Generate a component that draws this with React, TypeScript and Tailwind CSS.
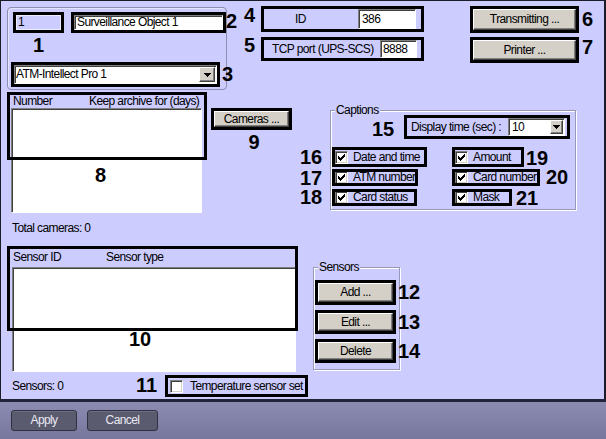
import React from "react";

const sunken =
  "border border-t-[#808080] border-l-[#808080] border-r-white border-b-white shadow-[inset_1px_1px_0_#404040]";
const raised =
  "bg-[#d4d0c8] border border-t-white border-l-white border-r-[#404040] border-b-[#404040] shadow-[inset_-1px_-1px_0_#808080]";

function Num({ children, className = "" }: { children: React.ReactNode; className?: string }) {
  return (
    <div className={`font-['Liberation_Sans',sans-serif] font-bold text-[20px] leading-[20px] tracking-normal text-black shrink-0 ${className}`}>
      {children}
    </div>
  );
}

function Hl({ children, className = "" }: { children?: React.ReactNode; className?: string }) {
  return (
    <div className={`outline-[3px] outline-solid outline-black outline-offset-[-3px] p-[3px] shrink-0 ${className}`}>
      {children}
    </div>
  );
}

function Btn({ children }: { children: React.ReactNode }) {
  return <div className={`h-full w-full ${raised} flex items-center justify-center whitespace-nowrap`}>{children}</div>;
}

const checkPixels = [
  [6, 0], [5, 1], [6, 1], [0, 2], [4, 2], [5, 2], [6, 2], [0, 3], [1, 3], [3, 3], [4, 3], [5, 3],
  [0, 4], [1, 4], [2, 4], [3, 4], [4, 4], [1, 5], [2, 5], [3, 5], [2, 6],
];
const checkD = checkPixels.map(([x, y]) => `M${x} ${y}h1v1h-1z`).join("");

function Check({ checked }: { checked: boolean }) {
  return (
    <div className="w-[13px] h-[13px] shrink-0 bg-white border border-t-[#808080] border-l-[#808080] border-r-white border-b-white shadow-[inset_1px_1px_0_#404040,inset_-1px_-1px_0_#d4d0c8] flex items-center justify-center">
      {checked && (
        <svg width="7" height="7" viewBox="0 0 7 7" shapeRendering="crispEdges">
          <path d={checkD} fill="#000" />
        </svg>
      )}
    </div>
  );
}

function Arrow() {
  return (
    <svg width="7" height="4" viewBox="0 0 7 4" shapeRendering="crispEdges">
      <path d="M0 0h7v1h-1v1h-1v1h-1v1h-1v-1h-1v-1h-1v-1h-1z" fill="#000" />
    </svg>
  );
}

function CheckHl({ label, w, h, checked = true }: { label: string; w: string; h: string; checked?: boolean }) {
  return (
    <Hl className={`${w} ${h}`}>
      <div className="h-full flex items-center">
        <Check checked={checked} />
        <span className="ml-[5px] whitespace-nowrap">{label}</span>
      </div>
    </Hl>
  );
}

export default function App() {
  return (
    <div className="w-[606px] h-[439px] flex flex-col overflow-hidden font-['Liberation_Sans',Arial,sans-serif] text-[12px] leading-[15px] tracking-[-0.6px] text-black">
      <div className="h-[399px] shrink-0 flex flex-col bg-[#ccccff] border-t border-l border-r-2 border-[#1c1c28]">
        {/* Section A */}
        <div className="h-[91px] flex items-start shrink-0">
          <div className="ml-[6px] mt-[6px] w-[220px] h-[83px] border border-[#8e8eb0] rounded-[4px] shadow-[inset_1px_1px_0_#e4e4ff] flex flex-col shrink-0">
            <div className="mt-[4px] flex items-start">
              <Hl className="ml-[5px] w-[51px] h-[21px]">
                <div className="h-full bg-[#ccccff] border border-[#ececff] flex items-center pl-[1px]">1</div>
              </Hl>
              <Hl className="ml-[7px] w-[155px] h-[21px]">
                <div className={`h-full bg-white ${sunken} flex items-center pl-[2px] whitespace-nowrap`}>Surveillance Object 1</div>
              </Hl>
              <Num className="-mt-[1px]">2</Num>
            </div>
            <Num className="mt-[2px] ml-[5px] w-[51px] text-center">1</Num>
            <div className="mt-[7px] flex items-start">
              <Hl className="ml-[3px] w-[209px] h-[25px]">
                <div className={`h-full bg-white ${sunken} flex items-center`}>
                  <span className="pl-[1px] whitespace-nowrap">ATM-Intellect Pro 1</span>
                  <div className={`ml-auto mr-[1px] w-[16px] h-[15px] ${raised} flex items-center justify-center`}>
                    <Arrow />
                  </div>
                </div>
              </Hl>
              <Num className="ml-[2px] mt-[2px]">3</Num>
            </div>
          </div>

          <div className="ml-[17px] flex flex-col shrink-0">
            <div className="mt-[4px] flex items-start">
              <Num className="w-[17px]">4</Num>
              <Hl className="mt-[1px] w-[163px] h-[26px]">
                <div className="h-full flex items-stretch">
                  <span className="pl-[31px] self-center">ID</span>
                  <div className={`ml-auto mr-[5px] w-[58px] bg-white ${sunken} flex items-center pl-[3px]`}>386</div>
                </div>
              </Hl>
            </div>
            <div className="mt-[3px] flex items-start">
              <Num className="w-[17px]">5</Num>
              <Hl className="mt-[2px] w-[163px] h-[24px]">
                <div className="h-full flex items-stretch">
                  <span className="pl-[8px] self-center whitespace-nowrap">TCP port (UPS-SCS)</span>
                  <div className={`ml-auto mr-[4px] w-[37px] bg-white ${sunken} flex items-center pl-[2px]`}>8888</div>
                </div>
              </Hl>
            </div>
          </div>

          <div className="ml-[46px] flex flex-col shrink-0">
            <div className="mt-[5px] flex items-start">
              <Hl className="w-[109px] h-[27px]">
                <Btn>Transmitting ...</Btn>
              </Hl>
              <Num className="ml-[3px] mt-[3px]">6</Num>
            </div>
            <div className="mt-[4px] flex items-start">
              <Hl className="w-[109px] h-[26px]">
                <Btn>Printer ...</Btn>
              </Hl>
              <Num className="ml-[3px]">7</Num>
            </div>
          </div>
        </div>

        {/* Section B */}
        <div className="h-[148px] flex items-start shrink-0">
          <div className="ml-[6px] w-[200px] relative shrink-0 flex flex-col">
            <div className="h-[16px] pt-[2px] flex whitespace-nowrap">
              <span className="ml-[6px] w-[76px]">Number</span>
              <span>Keep archive for (days)</span>
            </div>
            <div className={`ml-[4px] w-[191px] h-[105px] bg-white ${sunken}`}>
              <Num className="pt-[56px] pl-[83px]">8</Num>
            </div>
            <div className="absolute left-0 top-0 w-[200px] h-[68px] border-[3px] border-black" />
            <div className="mt-[8px] ml-[5px] whitespace-nowrap">Total cameras: 0</div>
          </div>

          <div className="ml-[4px] mt-[16px] flex flex-col shrink-0">
            <Hl className="w-[81px] h-[22px]">
              <Btn>Cameras ...</Btn>
            </Hl>
            <Num className="mt-[2px] pl-[5px] text-center">9</Num>
          </div>

          <div className="ml-[8px] mt-[55px] w-[30px] flex flex-col shrink-0">
            <Num className="h-[21px] leading-[21px]">16</Num>
            <Num className="h-[19px] leading-[19px]">17</Num>
            <Num className="h-[20px]">18</Num>
          </div>

          <div className="mt-[18px] w-[246px] h-[100px] relative border border-[#9898b8] shadow-[inset_1px_1px_0_#ffffff,1px_1px_0_#ffffff] shrink-0 flex flex-col">
            <span className="absolute left-[4px] -top-[8px] px-[1px] bg-[#ccccff]">Captions</span>
            <div className="mt-[4px] flex items-start">
              <Num className="ml-[41px] w-[32px] mt-[4px]">15</Num>
              <Hl className="w-[166px] h-[24px]">
                <div className="h-full flex items-center">
                  <span className="pl-[4px] whitespace-nowrap">Display time (sec) :</span>
                  <div className={`ml-auto mr-[2px] w-[57px] h-full bg-white ${sunken} flex items-center`}>
                    <span className="pl-[3px]">10</span>
                    <div className={`ml-auto mr-[1px] w-[13px] h-[14px] ${raised} flex items-center justify-center`}>
                      <Arrow />
                    </div>
                  </div>
                </div>
              </Hl>
            </div>
            <div className="mt-[8px] flex items-start">
              <div className="ml-[1px] w-[120px] shrink-0">
                <CheckHl label="Date and time" w="w-[95px]" h="h-[20px]" />
              </div>
              <CheckHl label="Amount" w="w-[72px]" h="h-[20px]" />
              <Num className="ml-[2px] mt-[1px]">19</Num>
            </div>
            <div className="mt-[1px] flex items-start">
              <div className="ml-[1px] w-[120px] shrink-0">
                <CheckHl label="ATM number" w="w-[86px]" h="h-[17px]" />
              </div>
              <CheckHl label="Card number" w="w-[88px]" h="h-[17px]" />
              <Num className="ml-[6px] -mt-[2px]">20</Num>
            </div>
            <div className="mt-[2px] flex items-start">
              <div className="ml-[1px] w-[120px] shrink-0">
                <CheckHl label="Card status" w="w-[85px]" h="h-[17px]" />
              </div>
              <CheckHl label="Mask" w="w-[60px]" h="h-[17px]" />
              <Num className="ml-[4px] -mt-[1px]">21</Num>
            </div>
          </div>
        </div>

        {/* Section C */}
        <div className="flex-1 flex items-start">
          <div className="ml-[6px] flex flex-col shrink-0">
            <div className="mt-[6px] w-[291px] relative flex flex-col">
              <div className="h-[21px] pt-[4px] flex whitespace-nowrap">
                <span className="ml-[6px] w-[93px]">Sensor ID</span>
                <span>Sensor type</span>
              </div>
              <div className={`ml-[5px] w-[284px] h-[105px] bg-white ${sunken}`}>
                <Num className="pt-[61px] pl-[116px]">10</Num>
              </div>
              <div className="absolute left-0 top-0 w-[291px] h-[85px] border-[3px] border-black" />
            </div>
            <div className="mt-[3px] flex items-start">
              <div className="ml-[5px] w-[124px] mt-[4px] whitespace-nowrap">Sensors: 0</div>
              <Num className="w-[29px]">11</Num>
              <Hl className="w-[143px] h-[22px]">
                <div className="h-full flex items-center">
                  <div className="ml-[2px]">
                    <Check checked={false} />
                  </div>
                  <span className="ml-[7px] whitespace-nowrap">Temperature sensor set</span>
                </div>
              </Hl>
            </div>
          </div>

          <div className="ml-[5px] mt-[27px] w-[87px] h-[103px] relative border border-[#9898b8] shadow-[inset_1px_1px_0_#ffffff,1px_1px_0_#ffffff] shrink-0 flex flex-col">
            <span className="absolute left-[4px] -top-[8px] px-[1px] bg-[#ccccff]">Sensors</span>
            <div className="mt-[12px] flex items-start">
              <Hl className="ml-[1px] w-[81px] h-[25px]">
                <Btn>Add ...</Btn>
              </Hl>
              <Num className="ml-[2px] mt-[2px]">12</Num>
            </div>
            <div className="mt-[5px] flex items-start">
              <Hl className="ml-[1px] w-[81px] h-[24px]">
                <Btn>Edit ...</Btn>
              </Hl>
              <Num className="ml-[2px] mt-[2px]">13</Num>
            </div>
            <div className="mt-[5px] flex items-start">
              <Hl className="ml-[1px] w-[81px] h-[24px]">
                <Btn>Delete</Btn>
              </Hl>
              <Num className="ml-[2px] mt-[2px]">14</Num>
            </div>
          </div>
        </div>
      </div>

      {/* Bottom bar */}
      <div className="flex-1 border-t-[3px] border-[#23233a] bg-linear-to-b from-[#8c8cb2] to-[#77779d] flex items-start">
        <div className="ml-[11px] mt-[8px] w-[66px] h-[21px] rounded-[3px] bg-[#5b5b70] border border-[#303042] shadow-[inset_0_1px_0_#6e6e84] text-[#e8e8f0] flex items-center justify-center">
          Apply
        </div>
        <div className="ml-[10px] mt-[8px] w-[71px] h-[21px] rounded-[3px] bg-[#5b5b70] border border-[#303042] shadow-[inset_0_1px_0_#6e6e84] text-[#e8e8f0] flex items-center justify-center">
          Cancel
        </div>
      </div>
    </div>
  );
}
